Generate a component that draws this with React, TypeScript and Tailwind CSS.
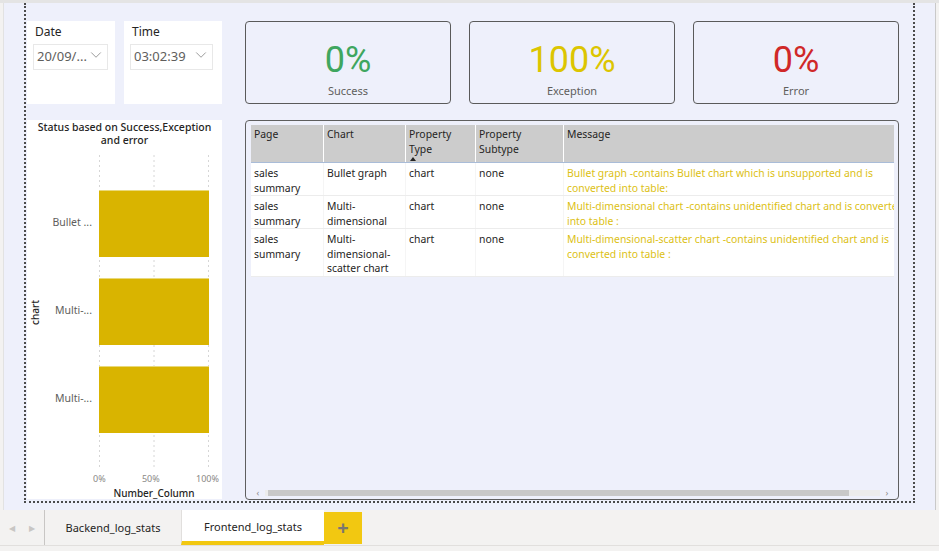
import { ChevronDown } from "lucide-react";

// text styles shared by the report visuals
const ui = "font-['Noto_Sans',sans-serif]";

type Row = {
  page: string[];
  chart: string[];
  type: string;
  subtype: string;
  message: string[];
};

const rows: Row[] = [
  {
    page: ["sales", "summary"],
    chart: ["Bullet graph"],
    type: "chart",
    subtype: "none",
    message: [
      "Bullet graph -contains Bullet chart which is unsupported and is",
      "converted into table:",
    ],
  },
  {
    page: ["sales", "summary"],
    chart: ["Multi-", "dimensional"],
    type: "chart",
    subtype: "none",
    message: [
      "Multi-dimensional chart -contains unidentified chart and is converted",
      "into table :",
    ],
  },
  {
    page: ["sales", "summary"],
    chart: ["Multi-", "dimensional-", "scatter chart"],
    type: "chart",
    subtype: "none",
    message: [
      "Multi-dimensional-scatter chart -contains unidentified chart and is",
      "converted into table :",
    ],
  },
];

const cols = "grid grid-cols-[73px_82px_70px_88px_360px]";

// slicer card (Date / Time)
const Slicer = ({ label, value, width, boxWidth }: { label: string; value: string; width: string; boxWidth: string }) => (
  <div className={`${width} h-[83px] bg-white pt-[3px] pl-[6px]`}>
    <div className="pl-[2px] text-[12px] leading-[16px] text-[#252423]">{label}</div>
    <div className={`${boxWidth} mt-[4px] h-[26px] border border-[#e8e8e8] flex items-center justify-between pl-[3px] pr-[2px]`}>
      <span className="text-[13px] text-[#605e5c] whitespace-nowrap">{value}</span>
      <ChevronDown className="w-[18px] h-[18px] -mt-[4px] text-[#7a7a7a]" strokeWidth={1} />
    </div>
  </div>
);

// KPI card
const Kpi = ({ value, label, color }: { value: string; label: string; color: string }) => (
  <div className="w-[206px] h-[83px] rounded-[4px] border border-[#5a5a5a] flex flex-col items-center">
    <div className={`mt-[18px] font-['Roboto',sans-serif] text-[36px] leading-[40px] ${color}`}>{value}</div>
    <div className="mt-[4px] text-[11px] leading-[14px] text-[#605e5c]">{label}</div>
  </div>
);

const StatusChart = () => (
  <div className="w-[195px] h-[379px] bg-white flex flex-col">
    <div className="pt-[1px] text-center text-[10.5px] leading-[13px] font-medium text-[#252423]">
      Status based on Success,Exception
      <br />
      and error
    </div>
    <div className="mt-[8px] h-[315px] flex">
      <div className="w-[16px] flex items-center justify-center">
        <span className="-rotate-90 text-[10px] font-medium text-[#252423]">chart</span>
      </div>
      <div className="w-[49px] pt-[24px] flex flex-col">
        {["Bullet ...", "Multi-...", "Multi-..."].map((c, i) => (
          <div key={i} className="h-[88px] flex items-center justify-end text-[10.5px] text-[#605e5c] whitespace-nowrap">
            {c}
          </div>
        ))}
      </div>
      <div className="ml-[7px] w-[110px] relative">
        <svg className="absolute inset-0" width="110" height="315">
          {[0.5, 55, 109.5].map((x) => (
            <line key={x} x1={x} x2={x} y1="0" y2="315" stroke="#d6d6d6" strokeDasharray="2 3" />
          ))}
        </svg>
        <div className="relative pt-[24px] flex flex-col">
          {[0, 1, 2].map((i) => (
            <div key={i} className="h-[88px] flex items-center">
              <div className="w-full h-[67px] bg-[#d9b400] border-t border-[#e9d97a]" />
            </div>
          ))}
        </div>
      </div>
    </div>
    <div className="mt-[3px] ml-[66px] w-[126px] flex justify-between text-[9px] leading-[12px] text-[#8a8886]">
      <span>0%</span>
      <span>50%</span>
      <span>100%</span>
    </div>
    <div className="mt-[2px] ml-[72px] w-[110px] text-center text-[10px] leading-[12px] font-medium text-[#252423]">
      Number_Column
    </div>
  </div>
);

const LogTable = () => (
  <div className="w-[654px] h-[380px] rounded-[4px] border border-[#5f5f5f] flex flex-col pt-[4px] pl-[5px] pr-[4px] pb-[1px]">
    <div className="w-[643px] overflow-hidden text-[10.4px] leading-[14.5px]">
      <div className={`${cols} w-max bg-[#cccccc] h-[38px] border-b border-[#a9bcd8] text-[#252423]`}>
        <div className="pl-[3px] pt-[2px] border-r border-white">Page</div>
        <div className="pl-[3px] pt-[2px] border-r border-white">Chart</div>
        <div className="pl-[3px] pt-[2px] border-r border-white">
          Property
          <br />
          Type
          <div className="ml-[1px] mt-[1px] w-0 h-0 border-l-[3px] border-r-[3px] border-b-[4px] border-l-transparent border-r-transparent border-b-[#252423]" />
        </div>
        <div className="pl-[3px] pt-[2px] border-r border-white">
          Property
          <br />
          Subtype
        </div>
        <div className="pl-[3px] pt-[2px]">Message</div>
      </div>
      {rows.map((r, i) => (
        <div key={i} className={`${cols} w-max bg-white border-b border-[#ececec] text-[#252423]`}>
          <div className="pl-[3px] pt-[3px] border-r border-[#f5f5f5]">
            {r.page.map((t, j) => (
              <div key={j}>{t}</div>
            ))}
          </div>
          <div className="pl-[3px] pt-[3px] border-r border-[#f5f5f5]">
            {r.chart.map((t, j) => (
              <div key={j}>{t}</div>
            ))}
          </div>
          <div className="pl-[3px] pt-[3px] border-r border-[#f5f5f5]">{r.type}</div>
          <div className="pl-[3px] pt-[3px] border-r border-[#f5f5f5]">{r.subtype}</div>
          <div className="pl-[3px] pt-[3px] text-[#dcbf14]">
            {r.message.map((t, j) => (
              <div key={j} className="whitespace-nowrap">{t}</div>
            ))}
          </div>
        </div>
      ))}
    </div>
    <div className="mt-auto h-[10px] flex items-center text-[9px] text-[#8a8a8a]">
      <span className="w-[14px] text-center">‹</span>
      <div className="flex-1 h-[6px] bg-[#ececec] flex">
        <div className="ml-[3px] w-[581px] h-full bg-[#c8c8c8]" />
      </div>
      <span className="w-[14px] text-center">›</span>
    </div>
  </div>
);

export default function App() {
  return (
    <div className={`${ui} w-[939px] h-[551px] overflow-hidden flex flex-col bg-[#f3f2f1]`}>
      <div className="h-[3px] bg-[#e4e4e4]" />
      <div className="h-[507px] flex">
        <div className="w-[4px] bg-[#f3f2f1] border-r border-[#e2e2e2]" />
        <div className="w-[931px] bg-[#eef0fb] pl-[20px]">
          <div className="w-[891px] h-[500px] border-l-2 border-r-2 border-b-2 border-dotted border-[#4b4b4b] pl-[1px] pt-[18px]">
            <div className="flex">
              <div className="w-[195px] flex gap-[9px]">
                <Slicer label="Date" value="20/09/..." width="w-[88px]" boxWidth="w-[75px]" />
                <Slicer label="Time" value="03:02:39" width="w-[98px]" boxWidth="w-[83px]" />
              </div>
              <div className="ml-[23px] w-[654px] flex justify-between">
                <Kpi value="0%" label="Success" color="text-[#3fa65f]" />
                <Kpi value="100%" label="Exception" color="text-[#dcc500]" />
                <Kpi value="0%" label="Error" color="text-[#d02828]" />
              </div>
            </div>
            <div className="mt-[16px] flex">
              <StatusChart />
              <div className="ml-[23px]">
                <LogTable />
              </div>
            </div>
          </div>
        </div>
        <div className="w-px bg-[#c9c9c9]" />
        <div className="flex-1 bg-[#f3f2f1]" />
      </div>
      <div className="h-[35px] flex bg-[#f3f2f1] text-[11px] text-[#252423]">
        <div className="w-[44px] flex items-center justify-center gap-[14px] text-[8px] text-[#c8c6c4]">
          <span>◀</span>
          <span>▶</span>
        </div>
        <div className="w-px bg-[#c8c6c4]" />
        <div className="w-[136px] pt-[2px] flex items-center justify-center">Backend_log_stats</div>
        <div className="w-[143px] pt-[4px] bg-white border-l border-[#e1dfdd] border-b-4 border-b-[#f2c811] flex items-center justify-center">
          Frontend_log_stats
        </div>
        <div className="mt-[2px] w-[38px] h-[32px] bg-[#f2c811] flex items-center justify-center text-[20px] font-bold text-[#7a7770]">
          +
        </div>
      </div>
      <div className="h-px bg-[#e1dfdd]" />
      <div className="flex-1 bg-[#f3f2f1]" />
    </div>
  );
}
